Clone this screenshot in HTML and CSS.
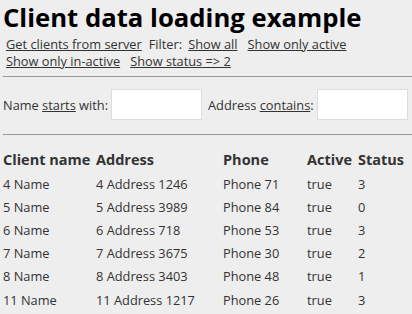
FILE: index.html
```html
<!DOCTYPE html>
<html lang="en">
<head>
  <meta charset="UTF-8" />
  <title>Client data loading example</title>
  <link rel="stylesheet" href="styles.css">
</head>
<body>
  <h1>Client data loading example</h1>

  <div class="actions">
    <a href="#">Get clients from server</a>
    <span>Filter:</span>
    <a href="#">Show all</a>
    <a href="#">Show only active</a>
    <a href="#">Show only in-active</a>
    <a href="#">Show status =&gt; 2</a>
  </div>

  <hr>

  <div class="search">
    <label for="name">Name <u>starts</u> with:</label>
    <input id="name" type="text">
    <label for="address">Address <u>contains</u>:</label>
    <input id="address" type="text">
  </div>

  <hr>

  <table class="clients">
    <thead>
      <tr>
        <th class="c-name">Client name</th>
        <th class="c-address">Address</th>
        <th class="c-phone">Phone</th>
        <th class="c-active">Active</th>
        <th>Status</th>
      </tr>
    </thead>
    <tbody>
      <tr><td>4 Name</td><td>4 Address 1246</td><td>Phone 71</td><td>true</td><td>3</td></tr>
      <tr><td>5 Name</td><td>5 Address 3989</td><td>Phone 84</td><td>true</td><td>0</td></tr>
      <tr><td>6 Name</td><td>6 Address 718</td><td>Phone 53</td><td>true</td><td>3</td></tr>
      <tr><td>7 Name</td><td>7 Address 3675</td><td>Phone 30</td><td>true</td><td>2</td></tr>
      <tr><td>8 Name</td><td>8 Address 3403</td><td>Phone 48</td><td>true</td><td>1</td></tr>
      <tr><td>11 Name</td><td>11 Address 1217</td><td>Phone 26</td><td>true</td><td>3</td></tr>
    </tbody>
  </table>
</body>
</html>
```

FILE: styles.css
```css
* {
  box-sizing: border-box;
}

body {
  margin: 0 0 0 3px;
  background: #eeeeee;
  color: #333;
  font-family: 'Open Sans', sans-serif;
  font-size: 12.8px;
  overflow: hidden;
}

h1 {
  margin: 2px 0 0;
  font-size: 25.7px;
  line-height: 32px;
  font-weight: 700;
  color: #000;
}

.actions {
  display: flex;
  flex-wrap: wrap;
  column-gap: 6px;
  padding: 2px 0 0 3px;
  line-height: 17px;
  width: 366px;
}

.actions a,
.actions span {
  white-space: nowrap;
  color: #333;
}

.actions a {
  margin-right: 4px;
}

.actions a:first-child {
  margin-right: 1px;
}

hr {
  margin: 6px 0 0;
  border: none;
  border-top: 1px solid #999;
}

.search {
  display: flex;
  align-items: center;
  gap: 3px;
  padding: 12px 0 8px;
}

.search label {
  white-space: nowrap;
}

.search input {
  width: 91px;
  height: 31px;
  border: 1px solid #ddd;
  background: #fff;
  margin-right: 3px;
}

.clients {
  margin-top: 12px;
  border-collapse: collapse;
}

.clients th {
  text-align: left;
  font-weight: 700;
  font-size: 14.5px;
  padding: 0;
  height: 25px;
  white-space: nowrap;
}

.clients td {
  padding: 0;
  height: 23.2px;
}

.c-name { width: 93px; }
.c-address { width: 127px; }
.c-phone { width: 84px; }
.c-active { width: 51px; }
```
